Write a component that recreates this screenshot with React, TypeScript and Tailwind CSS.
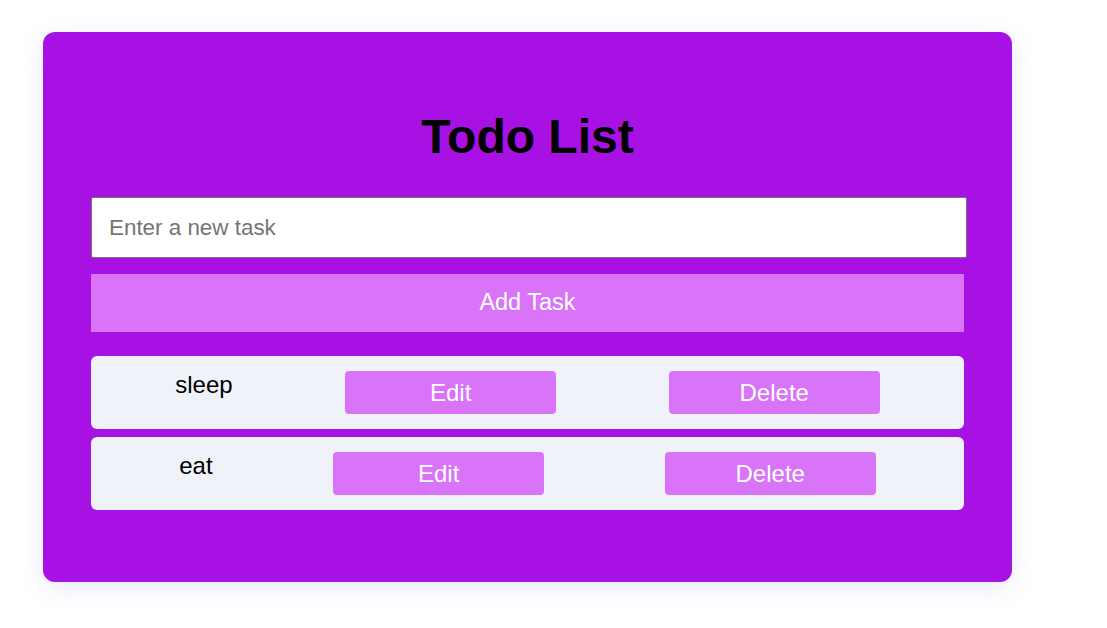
import React from "react";

const tasks = ["sleep", "eat"];

export default function App() {
  return (
    <div className="min-h-screen bg-white pt-[32px] pl-[43px] font-['Liberation_Sans',Arial,sans-serif]">
      <div className="w-[969px] h-[550px] rounded-[12px] bg-[#a711e4] px-[48px] shadow-[0_6px_24px_rgba(99,102,241,0.14)]">
        <h1 className="pt-[77px] text-center text-[48px] font-bold leading-[55px] text-black">Todo List</h1>
        <input
          type="text"
          placeholder="Enter a new task"
          className="mt-[33px] block h-[61px] w-[876px] rounded-[2px] border border-[#767676] bg-white px-[17px] text-[22.4px] text-black placeholder:text-[#757575] outline-none"
        />
        <button className="mt-[16px] block h-[58px] w-[873px] bg-[#d974f9] text-[23.5px] text-white">
          Add Task
        </button>
        <ul className="mt-[24px] flex w-[873px] flex-col gap-[8px]">
          {tasks.map((t) => (
            <li
              key={t}
              className="flex items-start justify-around rounded-[6px] bg-[#eff2f8] px-[28px] py-[15px]"
            >
              <span className="text-[24px] leading-[28px] text-black">{t}</span>
              <button className="h-[43px] w-[211px] rounded-[4px] bg-[#d974f9] text-[24px] text-white">
                Edit
              </button>
              <button className="h-[43px] w-[211px] rounded-[4px] bg-[#d974f9] text-[24px] text-white">
                Delete
              </button>
            </li>
          ))}
        </ul>
      </div>
    </div>
  );
}
